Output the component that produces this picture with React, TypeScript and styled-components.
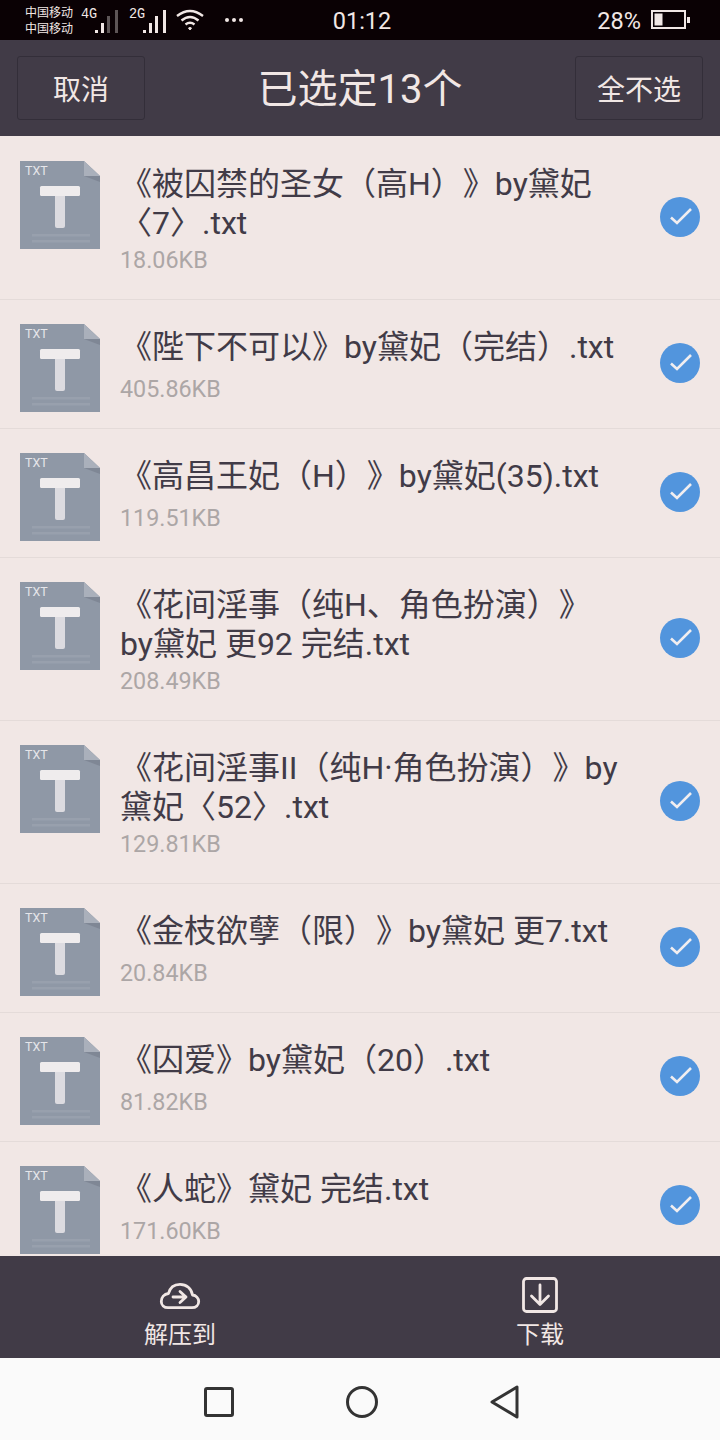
import React from "react";
import styled, { createGlobalStyle } from "styled-components";

const FONT = `Roboto, "Noto Sans CJK SC", sans-serif`;

const Global = createGlobalStyle`
  html, body { margin: 0; padding: 0; background: #f1e7e5; }
  * { box-sizing: border-box; }
`;

const Page = styled.div`
  width: 720px;
  height: 1440px;
  display: flex;
  flex-direction: column;
  overflow: hidden;
  font-family: ${FONT};
  text-spacing-trim: space-all;
`;

const StatusBar = styled.div`
  height: 40px;
  flex: none;
  background: #0a0104;
  color: #f1e7e5;
  display: grid;
  grid-template-columns: 1fr auto 1fr;
  align-items: center;
  padding: 0 30px 0 25px;
`;
const StatusLeft = styled.div`
  display: flex;
  align-items: center;
`;
const StatusRight = styled.div`
  display: flex;
  align-items: center;
  justify-content: flex-end;
  gap: 10px;
`;
const Carrier = styled.div`
  font-size: 12px;
  line-height: 16px;
  width: 56px;
  margin-top: 1px;
  white-space: nowrap;
`;
const Net = styled.span`
  font-family: "Liberation Mono", monospace;
  font-size: 15px;
  line-height: 14px;
  width: 14px;
  margin-bottom: 10px;
  transform: scaleX(0.9);
  transform-origin: left;
  white-space: nowrap;
`;
const Clock = styled.div`
  font-size: 23.5px;
  margin-left: 9px;
  margin-top: 1px;
`;
const Percent = styled.div`
  font-size: 23.5px;
  margin-top: 1px;
  margin-left: 2px;
`;

const Header = styled.div`
  height: 96px;
  flex: none;
  background: #413b47;
  color: #f1e7e5;
  display: flex;
  align-items: center;
  justify-content: space-between;
  padding: 0 17px;
`;
const HeaderButton = styled.div`
  width: 128px;
  height: 64px;
  border: 1px solid #332e39;
  border-radius: 3px;
  display: flex;
  align-items: center;
  justify-content: center;
  font-size: 28px;
`;
const HeaderTitle = styled.div`
  font-size: 40px;
  line-height: 50px;
  margin-top: 3px;
`;

const List = styled.div`
  flex: 1;
  min-height: 0;
  overflow: hidden;
  padding-top: 1px;
  background: #f1e7e5;
`;
const Row = styled.div<{ $height: number }>`
  height: ${(p) => p.$height}px;
  padding: 0 20px;
  display: flex;
  align-items: flex-start;
  border-bottom: 1px solid #e4dbd9;
`;
const FileIconWrap = styled.div`
  flex: none;
  width: 80px;
  height: 88px;
  margin-top: 24px;
  margin-right: 20px;
`;
const RowBody = styled.div`
  flex: 1;
  min-width: 0;
  height: 100%;
  padding-top: 28px;
  padding-bottom: 23px;
  display: flex;
  flex-direction: column;
`;
const RowTitle = styled.div`
  font-size: 32px;
  line-height: 39px;
  color: #413b47;
  width: 500px;
`;
const RowSize = styled.div`
  margin-top: auto;
  font-size: 23.3px;
  line-height: 31px;
  color: #aca6a6;
`;
const CheckWrap = styled.div`
  flex: none;
  width: 40px;
  height: 40px;
  align-self: center;
  margin-bottom: 3px;
`;

const BottomBar = styled.div`
  height: 102px;
  flex: none;
  background: #413b47;
  color: #f1e7e5;
  display: grid;
  grid-template-columns: 1fr 1fr;
`;
const Action = styled.div`
  display: flex;
  flex-direction: column;
  align-items: center;
  padding-top: 20px;
`;
const ActionIcon = styled.div`
  height: 38px;
  display: flex;
  align-items: center;
  justify-content: center;
`;
const ActionLabel = styled.div`
  font-size: 24px;
  line-height: 32px;
  margin-top: 5px;
`;

const NavBar = styled.div`
  height: 82px;
  flex: none;
  background: #fafafa;
  display: flex;
  justify-content: center;
  align-items: center;
  padding-left: 4px;
  padding-top: 5px;
`;
const NavCell = styled.div`
  width: 143px;
  display: flex;
  justify-content: center;
`;

const Signal = ({ lit }: { lit: number }) => {
  const bars = [
    { x: 0, h: 3 },
    { x: 6, h: 10 },
    { x: 12, h: 17 },
    { x: 20, h: 23 },
  ];
  return (
    <svg width="24" height="24" viewBox="0 0 24 24" style={{ marginRight: 10, marginTop: 2 }}>
      {bars.map((b, i) => (
        <rect key={i} x={b.x} y={24 - b.h} width="3" height={b.h} fill={i < lit ? "#f1e7e5" : "#5d5556"} />
      ))}
    </svg>
  );
};

const Wifi = () => (
  <svg width="28" height="22" viewBox="0 0 28 22" fill="none" stroke="#f1e7e5" strokeWidth="2.4" style={{ marginRight: 20, marginLeft: -1 }}>
    <path d="M1 7 Q14 -3 27 7" />
    <path d="M5.5 11.5 Q14 4.5 22.5 11.5" />
    <path d="M9.5 15.5 Q14 12 18.5 15.5" />
    <path d="M12.5 19 L14 21 L15.5 19 Q14 18 12.5 19Z" fill="#f1e7e5" strokeWidth="1" />
  </svg>
);

const Dots = () => (
  <svg width="20" height="6" viewBox="0 0 20 6" fill="#f1e7e5">
    <circle cx="3" cy="3" r="2" />
    <circle cx="10" cy="3" r="2" />
    <circle cx="17" cy="3" r="2" />
  </svg>
);

const Battery = () => (
  <svg width="39" height="20" viewBox="0 0 39 20">
    <rect x="1" y="1" width="33" height="17" fill="none" stroke="#f1e7e5" strokeWidth="2" />
    <rect x="3.5" y="3.5" width="8" height="12" fill="#f1e7e5" />
    <rect x="36" y="7" width="3" height="6" fill="#f1e7e5" />
  </svg>
);

const FileIcon = () => (
  <svg width="80" height="88" viewBox="0 0 80 88">
    <path d="M0 0H64L80 15V88H0Z" fill="#8f98a6" />
    <path d="M64 15H80V21L64 15Z" fill="#7f8795" />
    <path d="M64 0L80 15H64Z" fill="#aab0bb" />
    <text x="5" y="14" fontFamily="Roboto, sans-serif" fontSize="12.5" fill="#e6e6ea">TXT</text>
    <rect x="35" y="30" width="10" height="37" rx="2" fill="#dcdbe0" />
    <rect x="20" y="25" width="40" height="10" rx="1.5" fill="#efeced" />
    <rect x="12" y="73" width="58" height="2.5" fill="#98a0ad" />
    <rect x="12" y="79" width="58" height="2.5" fill="#98a0ad" />
  </svg>
);

const Check = () => (
  <svg width="40" height="40" viewBox="0 0 40 40">
    <circle cx="20" cy="20" r="20" fill="#5295dd" />
    <path d="M11 20.5L17 26L31 12" fill="none" stroke="#f1eef0" strokeWidth="2.6" />
  </svg>
);

const CloudIcon = () => (
  <svg width="42" height="32" viewBox="0 -1 42 32" fill="none" stroke="#f1e7e5" strokeWidth="2.8" strokeLinejoin="round" strokeLinecap="round">
    <path d="M9 27.7H33C37 27.7 39.7 25 39.7 21.5C39.7 18 37 15.5 33.5 15C32.5 8.5 27.5 4.3 21 4.3C15.5 4.3 11 7.5 9.5 13.5C5 14 2.3 17.5 2.3 21.5C2.3 25 5 27.7 9 27.7Z" />
    <path d="M14 17H27M21 11.5L27 17L21 22.5" />
  </svg>
);

const DownloadIcon = () => (
  <svg width="36" height="36" viewBox="0 0 36 36" fill="none" stroke="#f1e7e5" strokeWidth="2.8" strokeLinejoin="round">
    <rect x="1.5" y="1.5" width="33" height="33" rx="3" />
    <path d="M18 8V27M9.5 19L18 27.5L26.5 19" strokeLinecap="round" />
  </svg>
);

const files = [
  { title: "《被囚禁的圣女（高H）》by黛妃〈7〉.txt", size: "18.06KB", height: 163 },
  { title: "《陛下不可以》by黛妃（完结）.txt", size: "405.86KB", height: 129 },
  { title: "《高昌王妃（H）》by黛妃(35).txt", size: "119.51KB", height: 129 },
  { title: "《花间淫事（纯H、角色扮演）》by黛妃 更92 完结.txt", size: "208.49KB", height: 163 },
  { title: "《花间淫事II（纯H·角色扮演）》by黛妃〈52〉.txt", size: "129.81KB", height: 163 },
  { title: "《金枝欲孽（限）》by黛妃 更7.txt", size: "20.84KB", height: 129 },
  { title: "《囚爱》by黛妃（20）.txt", size: "81.82KB", height: 129 },
  { title: "《人蛇》黛妃 完结.txt", size: "171.60KB", height: 129 },
];

export default function App() {
  return (
    <Page>
      <Global />
      <StatusBar>
        <StatusLeft>
          <Carrier>中国移动<br />中国移动</Carrier>
          <Net>4G</Net>
          <Signal lit={2} />
          <Net>2G</Net>
          <Signal lit={4} />
          <Wifi />
          <Dots />
        </StatusLeft>
        <Clock>01:12</Clock>
        <StatusRight>
          <Percent>28%</Percent>
          <Battery />
        </StatusRight>
      </StatusBar>
      <Header>
        <HeaderButton>取消</HeaderButton>
        <HeaderTitle>已选定13个</HeaderTitle>
        <HeaderButton>全不选</HeaderButton>
      </Header>
      <List>
        {files.map((f) => (
          <Row key={f.title} $height={f.height}>
            <FileIconWrap><FileIcon /></FileIconWrap>
            <RowBody>
              <RowTitle>{f.title}</RowTitle>
              <RowSize>{f.size}</RowSize>
            </RowBody>
            <CheckWrap><Check /></CheckWrap>
          </Row>
        ))}
      </List>
      <BottomBar>
        <Action>
          <ActionIcon><CloudIcon /></ActionIcon>
          <ActionLabel>解压到</ActionLabel>
        </Action>
        <Action>
          <ActionIcon><DownloadIcon /></ActionIcon>
          <ActionLabel>下载</ActionLabel>
        </Action>
      </BottomBar>
      <NavBar>
        <NavCell>
          <svg width="30" height="30" viewBox="0 0 30 30" fill="none" stroke="#333" strokeWidth="3">
            <rect x="1.5" y="1.5" width="27" height="27" rx="1.5" />
          </svg>
        </NavCell>
        <NavCell>
          <svg width="34" height="34" viewBox="0 0 34 34" fill="none" stroke="#333" strokeWidth="3">
            <circle cx="17" cy="17" r="14.5" />
          </svg>
        </NavCell>
        <NavCell>
          <svg width="30" height="34" viewBox="0 0 30 34" fill="none" stroke="#333" strokeWidth="3" strokeLinejoin="round">
            <path d="M27 2V32L2 17Z" />
          </svg>
        </NavCell>
      </NavBar>
    </Page>
  );
}
